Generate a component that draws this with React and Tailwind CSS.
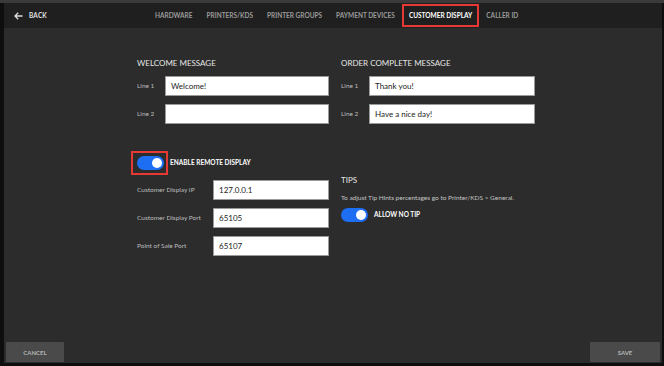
import React from 'react';

const font = { fontFamily: '"Lato", "Liberation Sans", sans-serif' };

const Toggle = () => (
    <div className="w-[27px] h-[14px] rounded-full bg-[#1d6ef2] flex items-center justify-end pr-[2px]">
        <div className="w-[10px] h-[10px] rounded-full bg-white" />
    </div>
);

const Field = ({ label, value, labelW, inputW }) => (
    <div className="flex items-center h-[20px]">
        <span className={`${labelW} text-[6.5px] text-[#bdbdbd]`}>{label}</span>
        <div className={`${inputW} h-[20px] bg-white border border-[#9a9a9a] flex items-center px-[5px] text-[8px] text-[#222]`}>
            {value}
        </div>
    </div>
);

const tabs = ['HARDWARE', 'PRINTERS/KDS', 'PRINTER GROUPS', 'PAYMENT DEVICES', 'CUSTOMER DISPLAY', 'CALLER ID'];

export default function App() {
    return (
        <div style={font} className="w-[664px] h-[366px] bg-[#0e0e0e] pl-[4px] pr-[2px] pb-[3px] flex flex-col">
            <div className="h-[3px] bg-[#3a3a3a] -ml-[4px] -mr-[2px]" />
            {/* Header */}
            <div className="h-[25px] bg-[#1f1f1f] flex items-center">
                <div className="flex items-center gap-[6px] pl-[10px] w-[151px]">
                    <svg width="9" height="8" viewBox="0 0 9 8" fill="none" stroke="#e0e0e0" strokeWidth="1.3">
                        <path d="M8.5 4H1M4.2 0.8L1 4l3.2 3.2" />
                    </svg>
                    <span className="text-[6.5px] font-bold text-[#e0e0e0] tracking-wide">BACK</span>
                </div>
                <div className="flex items-center gap-[14px]">
                    {tabs.map((t) => (
                        t === 'CUSTOMER DISPLAY' ? (
                            <div key={t} className="h-[23px] px-[5px] -mx-[7px] border-2 border-[#e53935] flex items-center">
                                <span className="text-[6.5px] font-bold text-white">{t}</span>
                            </div>
                        ) : (
                            <span key={t} className="text-[6.5px] font-bold text-[#9a9a9a]">{t}</span>
                        )
                    ))}
                </div>
            </div>

            {/* Body */}
            <div className="flex-1 bg-[#2c2c2c] flex flex-col">
                <div className="flex pl-[133px] pt-[29px] gap-[12px]">
                    <div className="w-[192px] flex flex-col">
                        <span className="text-[8px] text-[#e6e6e6] mb-[7px]">WELCOME MESSAGE</span>
                        <div className="flex flex-col gap-[8px]">
                            <Field label="Line 1" value="Welcome!" labelW="w-[28px]" inputW="w-[164px]" />
                            <Field label="Line 2" value="" labelW="w-[28px]" inputW="w-[164px]" />
                        </div>
                    </div>
                    <div className="w-[194px] flex flex-col">
                        <span className="text-[8px] text-[#e6e6e6] mb-[7px]">ORDER COMPLETE MESSAGE</span>
                        <div className="flex flex-col gap-[8px]">
                            <Field label="Line 1" value="Thank you!" labelW="w-[28px]" inputW="w-[166px]" />
                            <Field label="Line 2" value="Have a nice day!" labelW="w-[28px]" inputW="w-[166px]" />
                        </div>
                    </div>
                </div>

                <div className="flex pl-[133px] pt-[27px] gap-[12px]">
                    <div className="w-[192px] flex flex-col">
                        <div className="flex items-center h-[24px]">
                            <div className="w-[37px] h-[24px] border-2 border-[#e53935] -ml-[6px] flex items-center pl-[4px]">
                                <Toggle />
                            </div>
                            <span className="text-[6.5px] font-bold text-white ml-[2px]">ENABLE REMOTE DISPLAY</span>
                        </div>
                        <div className="flex flex-col gap-[8px] mt-[5px]">
                            <Field label="Customer Display IP" value="127.0.0.1" labelW="w-[76px]" inputW="w-[116px]" />
                            <Field label="Customer Display Port" value="65105" labelW="w-[76px]" inputW="w-[116px]" />
                            <Field label="Point of Sale Port" value="65107" labelW="w-[76px]" inputW="w-[116px]" />
                        </div>
                    </div>
                    <div className="flex flex-col pt-[23px]">
                        <span className="text-[8px] text-[#e6e6e6]">TIPS</span>
                        <span className="text-[6.5px] text-[#c4c4c4] mt-[7px]">To adjust Tip Hints percentages go to Printer/KDS &gt; General.</span>
                        <div className="flex items-center gap-[6px] mt-[5px]">
                            <Toggle />
                            <span className="text-[6.5px] font-bold text-white">ALLOW NO TIP</span>
                        </div>
                    </div>
                </div>

                <div className="flex-1" />
                <div className="flex justify-between items-end px-[2px] pb-[1px]">
                    <div className="w-[58px] h-[20px] bg-[#4a4a4a] rounded-[1px] flex items-center justify-center">
                        <span className="text-[6px] font-bold text-[#b5b5b5]">CANCEL</span>
                    </div>
                    <div className="w-[70px] h-[20px] bg-[#4a4a4a] rounded-[1px] flex items-center justify-center">
                        <span className="text-[6px] font-bold text-[#b5b5b5]">SAVE</span>
                    </div>
                </div>
            </div>
        </div>
    );
}
